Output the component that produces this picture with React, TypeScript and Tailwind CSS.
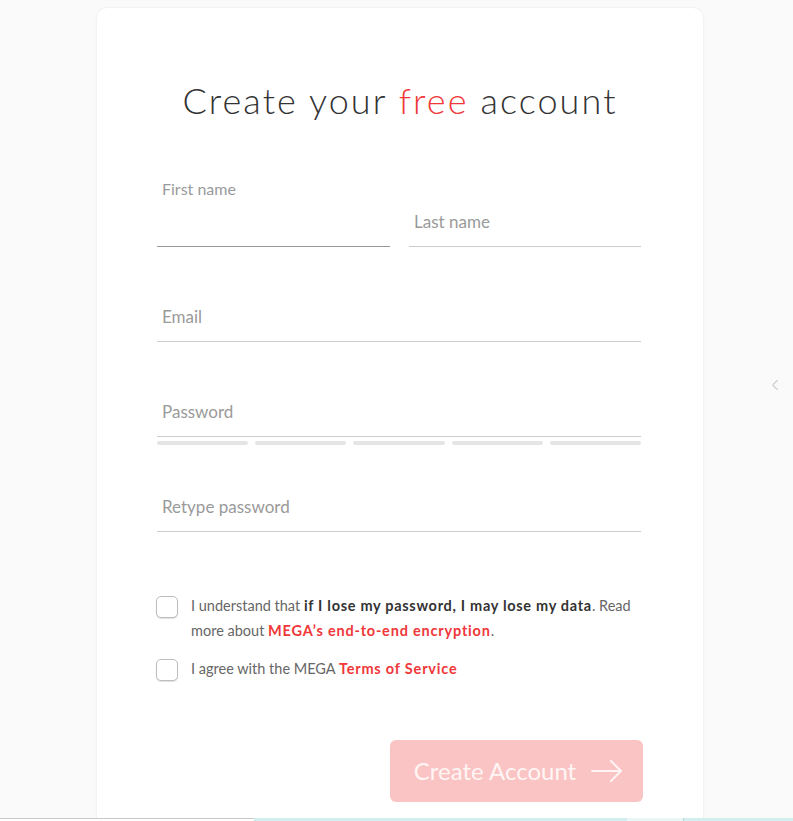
import { ChevronLeft } from "lucide-react";

const Field = ({ label, className = "" }: { label: string; className?: string }) => (
  <div className={`h-[49px] border-b border-[#cccccc] flex items-center px-[5px] ${className}`}>
    <span className="text-[17px] text-[#9a9a9a]">{label}</span>
  </div>
);

const Checkbox = () => (
  <div className="mt-[3px] w-[22px] h-[22px] shrink-0 rounded-[5px] border border-[#bdbdbd] bg-white shadow-[0_1px_1px_rgba(0,0,0,0.12)]"></div>
);

export default function App() {
  return (
    <div className="h-[821px] overflow-hidden bg-[#fafafa] flex flex-col font-['Lato',sans-serif]">
      <div className="relative flex-1 overflow-hidden">
        <div className="ml-[97px] mt-[8px] w-[606px] h-[900px] bg-white rounded-[10px] shadow-[0_0_3px_rgba(0,0,0,0.08)] pt-[72px] pl-[60px] pr-[62px]">
          {/* title */}
          <h1 className="text-center text-[36px] leading-[40px] font-light tracking-[2.1px] text-[#333333] -ml-[60px] -mr-[62px]">
            Create your <span className="text-[#f0373a]">free</span> account
          </h1>

          {/* name row */}
          <div className="mt-[60px] flex gap-[19px]">
            <div className="w-[233px]">
              <div className="h-[18px] leading-[18px] px-[5px] text-[16px] text-[#9a9a9a]">First name</div>
              <div className="h-[49px] border-b border-[#999999]"></div>
            </div>
            <div className="flex-1 pt-[18px]">
              <Field label="Last name" />
            </div>
          </div>

          <Field label="Email" className="mt-[46px]" />

          <Field label="Password" className="mt-[46px]" />
          <div className="mt-[4px] flex gap-[7px]">
            <div className="flex-1 h-[4px] rounded-full bg-[#e5e5e5]"></div>
            <div className="flex-1 h-[4px] rounded-full bg-[#e5e5e5]"></div>
            <div className="flex-1 h-[4px] rounded-full bg-[#e5e5e5]"></div>
            <div className="flex-1 h-[4px] rounded-full bg-[#e5e5e5]"></div>
            <div className="flex-1 h-[4px] rounded-full bg-[#e5e5e5]"></div>
          </div>

          <Field label="Retype password" className="mt-[38px]" />

          {/* checkboxes */}
          <div className="mt-[61px] flex gap-[13px] -ml-[1px] text-[14.5px] leading-[25px] text-[#666666]">
            <Checkbox />
            <p>
              I understand that{" "}
              <b className="font-bold tracking-[0.7px] text-[#333333]">if I lose my password, I may lose my data</b>. Read more
              about <span className="font-bold tracking-[0.8px] text-[#f0373a]">MEGA’s end-to-end encryption</span>.
            </p>
          </div>
          <div className="mt-[13px] flex gap-[13px] -ml-[1px] text-[14.5px] leading-[25px] text-[#666666]">
            <Checkbox />
            <p>
              I agree with the MEGA <span className="font-bold tracking-[0.8px] text-[#f0373a]">Terms of Service</span>
            </p>
          </div>

          <div className="mt-[59px] flex justify-end -mr-[2px]">
            <button className="w-[253px] h-[62px] rounded-[6px] bg-[#fbc4c4] flex items-center justify-center gap-[15px] pl-[4px] text-[24px] text-[#fff5f5]">
              Create Account
              <svg width="32" height="22" viewBox="0 0 32 22" fill="none" stroke="#fff5f5" strokeWidth="2" strokeLinecap="round" strokeLinejoin="round">
                <path d="M1 11h29" />
                <path d="M20 1l10 10-10 10" />
              </svg>
            </button>
          </div>
        </div>

        <ChevronLeft className="absolute left-[766px] top-[376px] w-[18px] h-[18px] text-[#cfcfcf]" strokeWidth={1.5} />
      </div>

      {/* bottom strip */}
      <div className="h-[3px] flex">
        <div className="w-[254px] border-t border-[#c8c8c8] bg-white"></div>
        <div className="w-[373px] bg-[#d3eeee]"></div>
        <div className="w-[56px] bg-[#e8f6f5]"></div>
        <div className="w-px bg-[#b8d4d4]"></div>
        <div className="flex-1 bg-[#d3eeee]"></div>
      </div>
    </div>
  );
}
